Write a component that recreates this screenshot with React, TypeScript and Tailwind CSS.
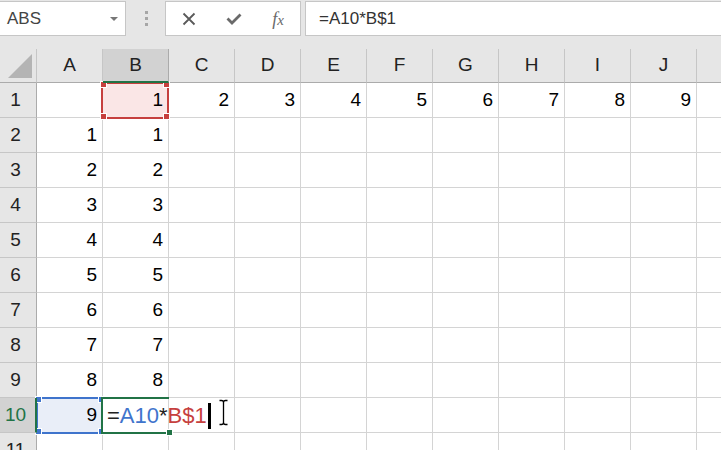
import React from 'react';

const COLS = ['A', 'B', 'C', 'D', 'E', 'F', 'G', 'H', 'I', 'J'];

// values for rows 1..9 (row 10 handled separately)
function cellValue(row: number, col: number): string {
  if (row === 1) return col === 0 ? '' : String(col);
  if (row >= 2 && row <= 9 && col <= 1) return String(row - 1);
  return '';
}

function Handle({ className }: { className: string }) {
  return <span className={`absolute w-[7px] h-[7px] border border-white ${className}`} />;
}

function IBeam() {
  return (
    <svg width="11" height="27" viewBox="0 0 11 27" className="absolute left-[115px] top-[1px]">
      <path
        d="M1.5 1.5 H3.5 Q5.5 1.5 5.5 3.5 V23.5 Q5.5 25.5 3.5 25.5 H1.5 M9.5 1.5 H7.5 Q5.5 1.5 5.5 3.5 M5.5 23.5 Q5.5 25.5 7.5 25.5 H9.5"
        fill="none"
        stroke="#000"
        strokeWidth="1.3"
      />
    </svg>
  );
}

function Toolbar() {
  return (
    <div className="h-[49px] bg-[#e6e6e6] pt-[1px] flex items-start">
      {/* name box */}
      <div className="w-[126px] h-[35px] bg-white border border-l-0 border-[#c6c6c6] flex items-center pl-[7px] pr-[7px]">
        <span className="flex-1 text-[17px] text-[#444]">ABS</span>
        <span className="w-0 h-0 border-l-[4px] border-r-[4px] border-t-[4px] border-l-transparent border-r-transparent border-t-[#777]" />
      </div>
      {/* drag dots */}
      <div className="w-[39px] h-[35px] flex flex-col items-center justify-center gap-[3px] pl-[1px]">
        <span className="w-[3px] h-[3px] bg-[#a6a6a6]" />
        <span className="w-[3px] h-[3px] bg-[#a6a6a6]" />
        <span className="w-[3px] h-[3px] bg-[#a6a6a6]" />
      </div>
      {/* cancel / enter / fx */}
      <div className="w-[136px] h-[35px] bg-white border border-[#c6c6c6] flex items-center">
        <div className="w-[46px] flex justify-center">
          <svg width="14" height="14" viewBox="0 0 14 14">
            <path d="M1.5 1.5 L12.5 12.5 M12.5 1.5 L1.5 12.5" stroke="#5a5a5a" strokeWidth="1.8" />
          </svg>
        </div>
        <div className="w-[44px] flex justify-center">
          <svg width="16" height="12" viewBox="0 0 16 12">
            <path d="M1.5 5.5 L6 10 L14.5 1.5" fill="none" stroke="#6a6a6a" strokeWidth="2.8" />
          </svg>
        </div>
        <div className="w-[44px] flex justify-center">
          <span className="font-['Liberation_Serif',serif] italic text-[18px] text-[#6a6a6a] leading-none">
            f<span className="text-[15px]">x</span>
          </span>
        </div>
      </div>
      <div className="w-[4px]" />
      {/* formula box */}
      <div className="flex-1 h-[35px] bg-white border border-r-0 border-[#c6c6c6] flex items-center pl-[13px]">
        <span className="text-[17px] text-[#333]">=A10*B$1</span>
      </div>
    </div>
  );
}

export default function App() {
  const rows = Array.from({ length: 11 }, (_, i) => i + 1);

  return (
    <div className="w-[721px] h-[450px] overflow-hidden bg-white font-['Liberation_Sans',Arial,sans-serif] select-none">
      <Toolbar />

      <div className="grid grid-cols-[37px_repeat(10,66px)_1fr] grid-rows-[34px_repeat(11,35px)]">
        {/* corner */}
        <div className="bg-[#e6e6e6] border-r border-b border-r-[#c6c6c6] border-b-[#ababab] relative">
          <span className="absolute right-[4px] bottom-[4px] w-0 h-0 [border-bottom:24px_solid_#b4b4b4] [border-left:24px_solid_transparent]" />
        </div>
        {COLS.map(c =>
          c === 'B' ? (
            <div
              key={c}
              className="relative z-20 bg-[#d2d2d2] border-r border-[#ababab] border-b-2 border-b-[#217346] flex items-center justify-center text-[19px] text-[#222]"
            >
              {c}
            </div>
          ) : (
            <div
              key={c}
              className="bg-[#e6e6e6] border-r border-r-[#c6c6c6] border-b border-b-[#ababab] flex items-center justify-center text-[19px] text-[#222]"
            >
              {c}
            </div>
          )
        )}
        <div className="bg-[#e6e6e6] border-b border-b-[#ababab]" />

        {rows.map(r => (
          <React.Fragment key={r}>
            {r === 10 ? (
              <div className="relative z-20 bg-[#d2d2d2] border-r-2 border-r-[#217346] border-b border-b-[#c6c6c6] flex items-center justify-center pr-[4px] text-[19px] text-[#217346]">
                {r}
              </div>
            ) : (
              <div className="bg-[#e6e6e6] border-r border-r-[#ababab] border-b border-b-[#c6c6c6] flex items-center justify-center pr-[5px] text-[19px] text-[#222]">
                {r}
              </div>
            )}

            {COLS.map((c, ci) => {
              if (r === 1 && c === 'B') {
                return (
                  <div
                    key={c}
                    className="relative bg-[#fae6e6] border-r border-b border-[#d4d4d4] flex items-center justify-end pr-[5px] text-[19px] text-black"
                  >
                    <span className="absolute -left-[2px] -right-[1px] -top-[1px] -bottom-[2px] border-2 border-[#c6403e] z-10 pointer-events-none">
                      <Handle className="-left-[3px] -top-[3px] bg-[#c6403e]" />
                      <Handle className="-right-[3px] -top-[3px] bg-[#c6403e]" />
                      <Handle className="-left-[3px] -bottom-[3px] bg-[#c6403e]" />
                      <Handle className="-right-[3px] -bottom-[3px] bg-[#c6403e]" />
                    </span>
                    <span className="relative z-10">1</span>
                  </div>
                );
              }
              if (r === 10 && c === 'A') {
                return (
                  <div
                    key={c}
                    className="relative bg-[#e9eef8] border-r border-b border-[#d4d4d4] flex items-center justify-end pr-[5px] text-[19px] text-black"
                  >
                    <span className="absolute -left-[1px] -right-[2px] -top-[1px] -bottom-[2px] border-2 border-[#3f74cc] z-10 pointer-events-none">
                      <Handle className="-left-[3px] -top-[3px] bg-[#3f74cc]" />
                      <Handle className="-right-[3px] -top-[3px] bg-[#3f74cc]" />
                      <Handle className="-left-[3px] -bottom-[3px] bg-[#3f74cc]" />
                      <Handle className="-right-[3px] -bottom-[3px] bg-[#3f74cc]" />
                    </span>
                    <span className="relative z-10">9</span>
                  </div>
                );
              }
              if (r === 10 && c === 'B') {
                return (
                  <div key={c} className="relative z-30 bg-white border-r border-b border-[#d4d4d4]">
                    <span className="absolute -left-[2px] -right-[1px] -top-[1px] -bottom-[2px] border-t-2 border-l-2 border-b-2 border-[#217346] pointer-events-none">
                      <Handle className="-right-[4px] -bottom-[4px] bg-[#217346]" />
                    </span>
                    <div className="absolute left-[4px] top-[1px] h-[33px] flex items-center whitespace-nowrap text-[22px] leading-none">
                      <span className="text-[#222]">=</span>
                      <span className="text-[#3f74cc]">A10</span>
                      <span className="text-[#222]">*</span>
                      <span className="text-[#c6403e]">B$1</span>
                      <span className="ml-[1px] w-[3px] h-[26px] bg-black" />
                    </div>
                    <IBeam />
                  </div>
                );
              }
              const v = r <= 9 ? cellValue(r, ci) : '';
              return (
                <div
                  key={c}
                  className="bg-white border-r border-b border-[#d4d4d4] flex items-center justify-end pr-[5px] text-[19px] text-black"
                >
                  {v}
                </div>
              );
            })}
            <div className="bg-white border-b border-[#d4d4d4]" />
          </React.Fragment>
        ))}
      </div>
    </div>
  );
}
